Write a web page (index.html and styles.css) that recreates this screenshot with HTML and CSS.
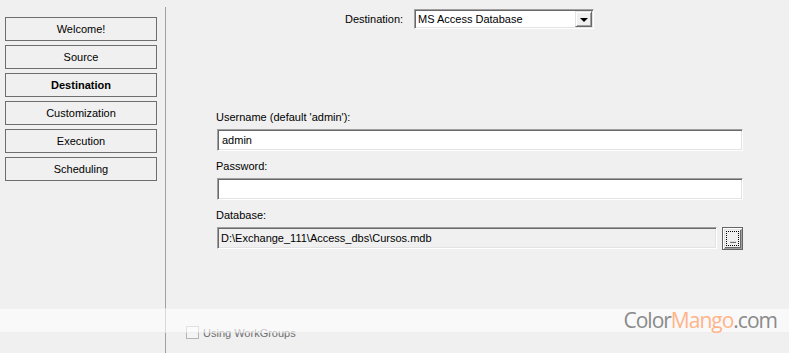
FILE: index.html
```html
<!DOCTYPE html>
<html lang="en">
<head>
    <meta charset="UTF-8">
    <title>Destination</title>
    <link rel="stylesheet" href="styles.css">
</head>
<body>
    <!-- Wizard steps -->
    <div class="steps">
        <div class="step">Welcome!</div>
        <div class="step">Source</div>
        <div class="step active">Destination</div>
        <div class="step">Customization</div>
        <div class="step">Execution</div>
        <div class="step">Scheduling</div>
    </div>

    <!-- Page content -->
    <div class="page">
        <div class="dest-row">
            <span class="dest-label">Destination:</span>
            <div class="combo">
                <span class="combo-text">MS Access Database</span>
                <div class="combo-btn"><span class="arrow"></span></div>
            </div>
        </div>

        <div class="form">
            <div class="field">
                <label>Username (default 'admin'):</label>
                <div class="edit">admin</div>
            </div>
            <div class="field">
                <label>Password:</label>
                <div class="edit"></div>
            </div>
            <div class="field">
                <label>Database:</label>
                <div class="db-row">
                    <div class="edit readonly">D:\Exchange_111\Access_dbs\Cursos.mdb</div>
                    <div class="browse"><span class="focus">...</span></div>
                </div>
            </div>
        </div>

        <div class="check-row">
            <span class="checkbox"></span>
            <span class="check-label">Using WorkGroups</span>
        </div>
    </div>

    <!-- Watermark band -->
    <div class="watermark">
        <span class="wm-gray">Color</span><span class="wm-orange">Mango</span><span class="wm-gray">.com</span>
    </div>
</body>
</html>
```

FILE: styles.css
```css
/* Reset */
* {
    margin: 0;
    padding: 0;
    box-sizing: border-box;
}

body {
    font-family: 'Liberation Sans', Arial, sans-serif;
    font-size: 11px;
    color: #000;
    background-color: #f0f0f0;
    display: flex;
    width: 789px;
    height: 353px;
    overflow: hidden;
}

/* Steps column */
.steps {
    width: 165px;
    padding: 17px 0 0 5px;
    display: flex;
    flex-direction: column;
    gap: 4px;
}

.step {
    width: 152px;
    height: 24px;
    border: 1px solid #6e6e6e;
    display: flex;
    align-items: center;
    justify-content: center;
}

.step.active {
    font-weight: bold;
}

/* Page */
.page {
    flex: 1;
    margin-top: 7px;
    padding-top: 2px;
    border-left: 1px solid #a0a0a0;
}

.dest-row {
    display: flex;
    align-items: center;
    padding-left: 179px;
    height: 20px;
}

.dest-label {
    width: 69px;
}

.combo {
    width: 180px;
    height: 20px;
    background-color: #fff;
    border-top: 1px solid #a0a0a0;
    border-left: 1px solid #a0a0a0;
    border-right: 1px solid #fff;
    border-bottom: 1px solid #fff;
    box-shadow: inset 1px 1px #696969, inset -1px -1px #e3e3e3;
    display: flex;
    align-items: center;
    padding: 0 1px 0 3px;
}

.combo-text {
    flex: 1;
}

.combo-btn {
    width: 17px;
    height: 16px;
    background-color: #f0f0f0;
    border-top: 1px solid #e3e3e3;
    border-left: 1px solid #e3e3e3;
    border-right: 1px solid #696969;
    border-bottom: 1px solid #696969;
    box-shadow: inset 1px 1px #fff, inset -1px -1px #a0a0a0;
    display: flex;
    align-items: center;
    justify-content: center;
}

.arrow {
    width: 0;
    height: 0;
    border-left: 4px solid transparent;
    border-right: 4px solid transparent;
    border-top: 4px solid #000;
    margin-top: 1px;
}

/* Form */
.form {
    margin-top: 81px;
    padding-left: 51px;
    display: flex;
    flex-direction: column;
    gap: 8px;
}

.field label {
    display: block;
    line-height: 14px;
    height: 14px;
    margin-bottom: 5px;
    margin-left: -1px;
}

.edit {
    width: 526px;
    height: 22px;
    background-color: #fff;
    border-top: 1px solid #a0a0a0;
    border-left: 1px solid #a0a0a0;
    border-right: 1px solid #fff;
    border-bottom: 1px solid #fff;
    box-shadow: inset 1px 1px #696969, inset -1px -1px #e3e3e3;
    padding-left: 4px;
    line-height: 20px;
}

.db-row {
    display: flex;
    align-items: flex-start;
    gap: 5px;
}

.edit.readonly {
    width: 500px;
    background-color: #f0f0f0;
    padding-left: 3px;
}

.browse {
    width: 21px;
    height: 23px;
    border: 1px solid #646464;
    box-shadow: inset 1px 1px #fff, inset -1px -1px #a0a0a0, inset 2px 2px #e3e3e3, inset -2px -2px #696969;
    background-color: #f0f0f0;
    padding: 3px;
}

.focus {
    display: block;
    width: 100%;
    height: 100%;
    border: 1px dotted #000;
    font-size: 11px;
    line-height: 14px;
    text-align: center;
    letter-spacing: -1px;
}

/* Checkbox */
.check-row {
    margin-top: 76px;
    padding-left: 20px;
    display: flex;
    align-items: center;
    gap: 4px;
}

.checkbox {
    width: 13px;
    height: 13px;
    border: 1px solid #b5b5b5;
    background-color: #f4f4f4;
}

.check-label {
    color: #6d6d6d;
}

/* Watermark */
.watermark {
    position: absolute;
    left: 0;
    top: 308px;
    width: 789px;
    height: 25px;
    background-color: rgba(255, 255, 255, 0.6);
    border-top: 1px solid rgba(0, 0, 0, 0.03);
    border-bottom: 1px solid rgba(0, 0, 0, 0.04);
    text-align: right;
    padding-right: 12px;
    font-family: 'Open Sans', sans-serif;
    font-size: 21px;
    line-height: 23px;
    letter-spacing: -1px;
}

.wm-gray {
    color: #8a8a8a;
}

.wm-orange {
    color: #ffb489;
}
```
